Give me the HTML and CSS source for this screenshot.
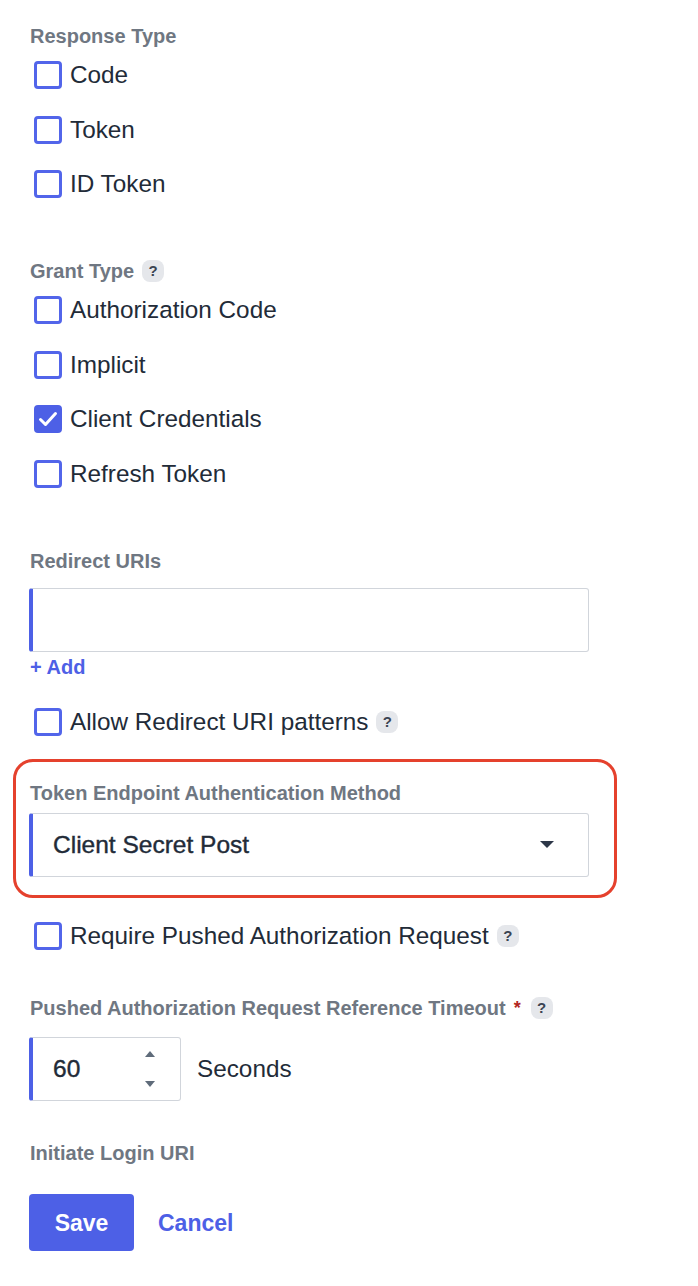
FILE: index.html
```html
<!DOCTYPE html>
<html lang="en">
<head>
<meta charset="utf-8">
<title>Client settings</title>
<link rel="stylesheet" href="styles.css">
</head>
<body>
<form class="form">
  <div class="label">Response Type</div>
  <div class="checks">
    <label class="check"><span class="box"></span>Code</label>
    <label class="check"><span class="box"></span>Token</label>
    <label class="check"><span class="box"></span>ID Token</label>
  </div>

  <div class="label section">Grant Type <span class="help">?</span></div>
  <div class="checks">
    <label class="check"><span class="box"></span>Authorization Code</label>
    <label class="check"><span class="box"></span>Implicit</label>
    <label class="check"><span class="box checked"><svg viewBox="0 0 28 28" width="28" height="28"><path d="M6.5 14.5 L11.5 19.5 L21.5 8.5" fill="none" stroke="#fff" stroke-width="3" stroke-linecap="round" stroke-linejoin="round"/></svg></span>Client Credentials</label>
    <label class="check"><span class="box"></span>Refresh Token</label>
  </div>

  <div class="label section">Redirect URIs</div>
  <div class="input uri"></div>
  <a class="add">+ Add</a>
  <label class="check allow"><span class="box"></span>Allow Redirect URI patterns <span class="help">?</span></label>

  <div class="highlight">
    <div class="label">Token Endpoint Authentication Method</div>
    <div class="input select"><span class="value">Client Secret Post</span><span class="caret"></span></div>
  </div>

  <label class="check par"><span class="box"></span>Require Pushed Authorization Request <span class="help">?</span></label>

  <div class="label par-label">Pushed Authorization Request Reference Timeout <span class="req">*</span> <span class="help">?</span></div>
  <div class="number-row">
    <div class="input number"><span class="value">60</span><span class="spin"><span class="up"></span><span class="down"></span></span></div>
    <span class="unit">Seconds</span>
  </div>

  <div class="label login">Initiate Login URI</div>
  <div class="actions">
    <button type="button" class="save">Save</button>
    <a class="cancel">Cancel</a>
  </div>
</form>
</body>
</html>
```

FILE: styles.css
```css
* { box-sizing: border-box; }
body {
  margin: 0;
  background: #fff;
  font-family: "Liberation Sans", Arial, Helvetica, sans-serif;
  color: #222b38;
}
.form {
  width: 620px;
  padding: 24px 0 0 29px;
  display: flex;
  flex-direction: column;
  align-items: flex-start;
}
.label {
  font-size: 20px;
  font-weight: bold;
  line-height: 24px;
  height: 24px;
  color: #6f7782;
  display: flex;
  align-items: center;
  padding-left: 1px;
}
.section { margin-top: 61px; }
.checks {
  display: flex;
  flex-direction: column;
  gap: 26.6px;
  margin-top: 13px;
}
.check {
  display: flex;
  align-items: center;
  height: 28px;
  padding-left: 5px;
  font-size: 24.3px;
  line-height: 28px;
  color: #222b38;
}
.box {
  width: 28px;
  height: 28px;
  border: 3px solid #5265ea;
  border-radius: 4px;
  margin-right: 8px;
  flex: none;
  display: flex;
  align-items: center;
  justify-content: center;
}
.box.checked {
  background: #4d60e6;
  border-color: #4d60e6;
}
.box svg { flex: none; }
.help {
  display: inline-flex;
  align-items: center;
  justify-content: center;
  width: 22px;
  height: 22px;
  border-radius: 8px;
  background: #e5e7eb;
  color: #3b4452;
  font-size: 15px;
  font-weight: bold;
  margin-left: 8px;
}
.input {
  width: 560px;
  height: 64px;
  border: 1px solid #d1d5db;
  border-left: 4px solid #4d60e6;
  border-radius: 3px;
  background: #fff;
}
.uri { margin-top: 15px; }
.add {
  margin-top: 3px;
  font-size: 20px;
  line-height: 24px;
  font-weight: bold;
  color: #4d60e6;
  padding-left: 1px;
}
.allow { margin-top: 29px; }
.highlight {
  margin-top: 23px;
  margin-left: -16px;
  width: 604px;
  border: 3px solid #e5412d;
  border-radius: 20px;
  padding: 19px 25px 18px 13px;
}
.select {
  margin-top: 8px;
  display: flex;
  align-items: center;
  justify-content: space-between;
  padding: 0 34px 0 20px;
}
.value {
  font-size: 24.5px;
  color: #222b38;
  -webkit-text-stroke: 0.4px #222b38;
}
.caret {
  width: 0;
  height: 0;
  border-left: 7px solid transparent;
  border-right: 7px solid transparent;
  border-top: 7px solid #2d3748;
}
.par { margin-top: 24px; }
.par-label { margin-top: 46px; }
.req {
  color: #b3261e;
  margin-left: 8px;
  font-size: 18px;
}
.par-label .help { margin-left: 10px; }
.number-row {
  margin-top: 17px;
  display: flex;
  align-items: center;
  gap: 16px;
}
.number {
  width: 152px;
  display: flex;
  align-items: center;
  justify-content: space-between;
  padding: 0 25px 0 20px;
}
.spin {
  display: flex;
  flex-direction: column;
  gap: 24px;
}
.up, .down {
  width: 0;
  height: 0;
  border-left: 5.5px solid transparent;
  border-right: 5.5px solid transparent;
}
.up { border-bottom: 6px solid #5f6b7a; }
.down { border-top: 6px solid #5f6b7a; }
.unit {
  font-size: 24.3px;
  color: #222b38;
}
.login { margin-top: 40px; }
.actions {
  margin-top: 29px;
  display: flex;
  align-items: center;
  gap: 24px;
}
.save {
  width: 105px;
  height: 57px;
  border: none;
  border-radius: 4px;
  background: #4d60e6;
  color: #fff;
  font-family: inherit;
  font-size: 23px;
  font-weight: bold;
  padding-top: 3px;
}
.cancel {
  font-size: 23px;
  font-weight: bold;
  color: #4d60e6;
  padding-top: 2px;
}
```
